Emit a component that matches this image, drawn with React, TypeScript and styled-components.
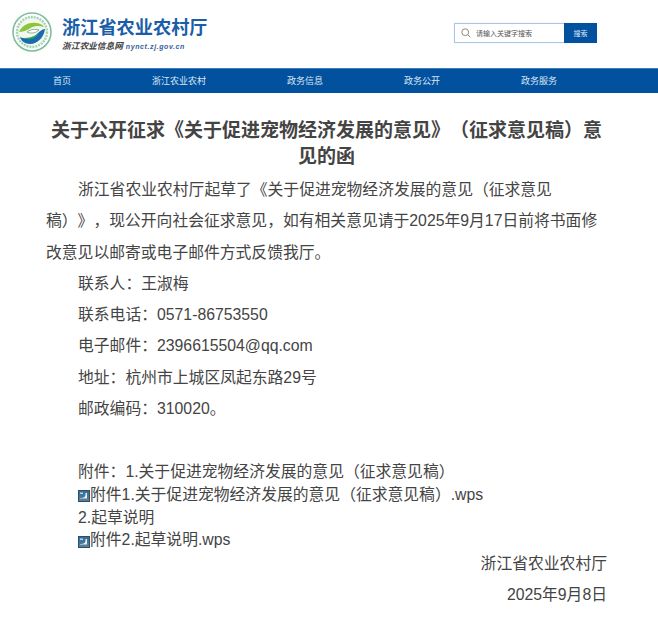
import React from "react";
import styled, { createGlobalStyle } from "styled-components";

const GlobalStyle = createGlobalStyle`
  html, body {
    margin: 0;
    padding: 0;
    background: #fff;
    font-family: "Liberation Sans", "Noto Sans CJK SC", sans-serif;
    text-spacing-trim: space-all;
  }
`;

const Page = styled.div`
  width: 658px;
  height: 634px;
  overflow: hidden;
  background: #fff;
`;

const Header = styled.header`
  height: 68px;
  display: flex;
  align-items: flex-start;
  justify-content: space-between;
  padding: 12px 61px 0 12px;
  box-sizing: border-box;
`;

const Brand = styled.div`
  display: flex;
  gap: 10px;
`;

const BrandText = styled.div`
  display: flex;
  flex-direction: column;
  padding-top: 3px;
`;

const BrandName = styled.div`
  color: #1a5ea8;
  font-size: 18.2px;
  font-weight: 700;
  line-height: 22px;
  font-family: "Noto Sans CJK SC", sans-serif;
`;

const BrandSub = styled.div`
  display: flex;
  align-items: baseline;
  gap: 3px;
  margin-top: 3px;
  font-size: 8.7px;
  font-style: italic;
  font-weight: 700;
  line-height: 12px;
  color: #444;
`;

const BrandUrl = styled.span`
  color: #33609c;
  font-size: 7px;
  letter-spacing: 0.6px;
`;

const Search = styled.form`
  display: flex;
  width: 143px;
  height: 20px;
  margin-top: 11px;
  border-radius: 2px;
  box-shadow: 0 0 1px #a9c6e6;
`;

const SearchField = styled.div`
  flex: 1;
  display: flex;
  align-items: center;
  gap: 5px;
  padding-left: 6px;
  border: 1px solid #a9c6e6;
  border-right: none;
  box-sizing: border-box;
  font-size: 7px;
  color: #555;
`;

const SearchButton = styled.div`
  width: 33px;
  background: #02519f;
  color: #dfe9f5;
  font-size: 7px;
  display: flex;
  align-items: center;
  justify-content: center;
`;

const Nav = styled.nav`
  height: 25px;
  background: #02519f;
  border-top: 1px solid #3d7dbd;
  box-sizing: border-box;
  display: grid;
  grid-template-columns: 99px 135px 117px 117px auto;
  padding-left: 53px;
  align-items: center;
`;

const NavItem = styled.a`
  color: #dbe6f3;
  font-size: 9px;
  line-height: 23px;
`;

const Article = styled.article`
  padding: 23px 51px 0 46px;
  color: #444;
`;

const Title = styled.h1`
  margin: 0 0 6px;
  font-size: 19px;
  line-height: 26px;
  font-weight: 700;
  text-align: center;
  color: #444;
  font-family: "Noto Sans CJK SC", sans-serif;
`;

const Paragraph = styled.p<{ $align?: string; $indent?: boolean }>`
  margin: 0;
  font-size: 15.8px;
  line-height: 31.3px;
  padding-left: ${(p) => (p.$indent ? "32px" : "0")};
  text-align: ${(p) => p.$align || "left"};
`;

const Lead = styled(Paragraph)`
  text-indent: 32px;
`;

const Attachments = styled.div`
  margin-top: 37px;
  padding-left: 32px;
  font-size: 15.8px;
  line-height: 22.7px;
`;

const Attachment = styled.div`
  display: flex;
  align-items: center;
`;

const FileIcon = styled.svg`
  width: 12px;
  height: 12px;
  flex: none;
  margin-top: 2px;
`;

const Signature = styled.div`
  margin-top: -4px;
`;

const Seal = () => (
  <svg width="40" height="40" viewBox="0 0 40 40">
    <circle cx="20" cy="20" r="19" fill="#fff" stroke="#7cbf9c" strokeWidth="1.6" />
    <circle cx="20" cy="20" r="15" fill="#f2f8ee" stroke="#a6d0b4" strokeWidth="2.4" strokeDasharray="2 1" />
    <path d="M7 20c3-7 11-10 17-9 3 0 6 1 8 4-6-2-11-1-15 2-3 2-7 3-10 3z" fill="#8cc63f" />
    <path d="M8 25c7 3 14 1 18-4 2-2 5-4 7-4-1 8-7 15-15 15-5 0-9-3-10-7z" fill="#1a6ab0" />
    <path d="M15 20c4-3 8-3 12-2-3 3-8 4-12 2z" fill="#fff" stroke="#3a8a5a" strokeWidth="0.6" />
    <path d="M12 26c5 0 10-1 15-5-3 5-9 8-15 5z" fill="#2aa55c" />
  </svg>
);

const WpsIcon = () => (
  <FileIcon viewBox="0 0 12 12">
    <defs>
      <linearGradient id="wps-fill" x1="0" y1="0" x2="0" y2="1">
        <stop offset="0" stopColor="#2f6f9c" />
        <stop offset="1" stopColor="#5d7f95" />
      </linearGradient>
    </defs>
    <rect x="0.5" y="0.5" width="11" height="11" fill="url(#wps-fill)" stroke="#2a4f6b" />
    <path d="M2 8c2 0 4-.5 5-1.5.5-1 .5-2 .5-3.5L9 3v5.5H2z" fill="#e6eef4" />
    <rect x="2" y="2.5" width="3" height="1.5" fill="#bcd3e2" />
  </FileIcon>
);

export default function App() {
  return (
    <Page>
      <GlobalStyle />
      <Header>
        <Brand>
          <Seal />
          <BrandText>
            <BrandName>浙江省农业农村厅</BrandName>
            <BrandSub>
              浙江农业信息网
              <BrandUrl>nynct.zj.gov.cn</BrandUrl>
            </BrandSub>
          </BrandText>
        </Brand>
        <Search>
          <SearchField>
            <svg width="10" height="10" viewBox="0 0 10 10" fill="none" stroke="#8a8a8a">
              <circle cx="4.2" cy="4.2" r="3.4" />
              <path d="M6.8 6.8 9.3 9.3" />
            </svg>
            请输入关键字搜索
          </SearchField>
          <SearchButton>搜索</SearchButton>
        </Search>
      </Header>
      <Nav>
        <NavItem>首页</NavItem>
        <NavItem>浙江农业农村</NavItem>
        <NavItem>政务信息</NavItem>
        <NavItem>政务公开</NavItem>
        <NavItem>政务服务</NavItem>
      </Nav>
      <Article>
        <Title>关于公开征求《关于促进宠物经济发展的意见》（征求意见稿）意见的函</Title>
        <Lead>
          浙江省农业农村厅起草了《关于促进宠物经济发展的意见（征求意见稿）》，现公开向社会征求意见，如有相关意见请于2025年9月17日前将书面修改意见以邮寄或电子邮件方式反馈我厅。
        </Lead>
        <Paragraph $indent>联系人：王淑梅</Paragraph>
        <Paragraph $indent>联系电话：0571-86753550</Paragraph>
        <Paragraph $indent>电子邮件：2396615504@qq.com</Paragraph>
        <Paragraph $indent>地址：杭州市上城区凤起东路29号</Paragraph>
        <Paragraph $indent>邮政编码：310020。</Paragraph>
        <Attachments>
          <div>附件：1.关于促进宠物经济发展的意见（征求意见稿）</div>
          <Attachment>
            <WpsIcon />
            附件1.关于促进宠物经济发展的意见（征求意见稿）.wps
          </Attachment>
          <div>2.起草说明</div>
          <Attachment>
            <WpsIcon />
            附件2.起草说明.wps
          </Attachment>
        </Attachments>
        <Signature>
          <Paragraph $align="right">浙江省农业农村厅</Paragraph>
          <Paragraph $align="right">2025年9月8日</Paragraph>
        </Signature>
      </Article>
    </Page>
  );
}
